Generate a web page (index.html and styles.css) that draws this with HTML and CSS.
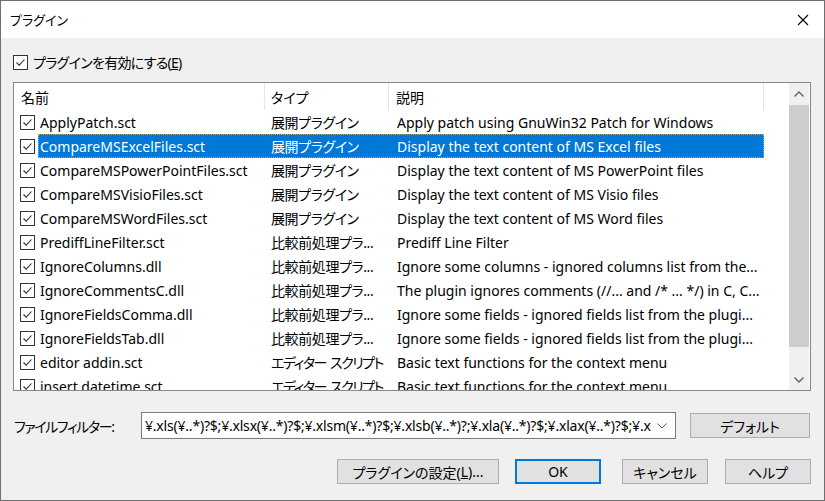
FILE: index.html
```html
<!DOCTYPE html>
<html lang="ja">
<head>
<meta charset="utf-8">
<title>プラグイン</title>
<link rel="stylesheet" href="styles.css">
</head>
<body>
<div class="window">
  <div class="titlebar">
    <span class="title">プラグイン</span>
    <svg class="close" width="12" height="12" viewBox="0 0 12 12"><path d="M1 1 L11 11 M11 1 L1 11" stroke="#000" stroke-width="1.1" fill="none"/></svg>
  </div>
  <div class="body">
    <label class="enable">
      <svg class="cb" width="15" height="15" viewBox="0 0 15 15"><rect x="0.5" y="0.5" width="14" height="14" fill="#fff" stroke="#333"/><path d="M3.5 7.5 L6.2 10.2 L11.5 4.5" stroke="#333" stroke-width="1.1" fill="none"/></svg>
      <span class="enable-text">プラグインを有効にする(<u>E</u>)</span>
    </label>

    <div class="list">
      <div class="list-content">
        <div class="header">
          <div class="h h-name">名前</div>
          <div class="h h-type">タイプ</div>
          <div class="h h-desc">説明</div>
          <div class="h h-rest"></div>
        </div>
        <div class="rows">
          <div class="row"><span class="cbcell"><svg class="cb" width="15" height="15" viewBox="0 0 15 15"><rect x="0.5" y="0.5" width="14" height="14" fill="#fff" stroke="#333"/><path d="M3.5 7.5 L6.2 10.2 L11.5 4.5" stroke="#333" stroke-width="1.1" fill="none"/></svg></span><div class="cells"><span class="c-name">ApplyPatch.sct</span><span class="c-type">展開プラグイン</span><span class="c-desc">Apply patch using GnuWin32 Patch for Windows</span></div></div>
          <div class="row"><span class="cbcell"><svg class="cb" width="15" height="15" viewBox="0 0 15 15"><rect x="0.5" y="0.5" width="14" height="14" fill="#fff" stroke="#333"/><path d="M3.5 7.5 L6.2 10.2 L11.5 4.5" stroke="#333" stroke-width="1.1" fill="none"/></svg></span><div class="cells selected"><span class="c-name">CompareMSExcelFiles.sct</span><span class="c-type">展開プラグイン</span><span class="c-desc">Display the text content of MS Excel files</span></div></div>
          <div class="row"><span class="cbcell"><svg class="cb" width="15" height="15" viewBox="0 0 15 15"><rect x="0.5" y="0.5" width="14" height="14" fill="#fff" stroke="#333"/><path d="M3.5 7.5 L6.2 10.2 L11.5 4.5" stroke="#333" stroke-width="1.1" fill="none"/></svg></span><div class="cells"><span class="c-name">CompareMSPowerPointFiles.sct</span><span class="c-type">展開プラグイン</span><span class="c-desc">Display the text content of MS PowerPoint files</span></div></div>
          <div class="row"><span class="cbcell"><svg class="cb" width="15" height="15" viewBox="0 0 15 15"><rect x="0.5" y="0.5" width="14" height="14" fill="#fff" stroke="#333"/><path d="M3.5 7.5 L6.2 10.2 L11.5 4.5" stroke="#333" stroke-width="1.1" fill="none"/></svg></span><div class="cells"><span class="c-name">CompareMSVisioFiles.sct</span><span class="c-type">展開プラグイン</span><span class="c-desc">Display the text content of MS Visio files</span></div></div>
          <div class="row"><span class="cbcell"><svg class="cb" width="15" height="15" viewBox="0 0 15 15"><rect x="0.5" y="0.5" width="14" height="14" fill="#fff" stroke="#333"/><path d="M3.5 7.5 L6.2 10.2 L11.5 4.5" stroke="#333" stroke-width="1.1" fill="none"/></svg></span><div class="cells"><span class="c-name">CompareMSWordFiles.sct</span><span class="c-type">展開プラグイン</span><span class="c-desc">Display the text content of MS Word files</span></div></div>
          <div class="row"><span class="cbcell"><svg class="cb" width="15" height="15" viewBox="0 0 15 15"><rect x="0.5" y="0.5" width="14" height="14" fill="#fff" stroke="#333"/><path d="M3.5 7.5 L6.2 10.2 L11.5 4.5" stroke="#333" stroke-width="1.1" fill="none"/></svg></span><div class="cells"><span class="c-name">PrediffLineFilter.sct</span><span class="c-type">比較前処理プラ...</span><span class="c-desc">Prediff Line Filter</span></div></div>
          <div class="row"><span class="cbcell"><svg class="cb" width="15" height="15" viewBox="0 0 15 15"><rect x="0.5" y="0.5" width="14" height="14" fill="#fff" stroke="#333"/><path d="M3.5 7.5 L6.2 10.2 L11.5 4.5" stroke="#333" stroke-width="1.1" fill="none"/></svg></span><div class="cells"><span class="c-name">IgnoreColumns.dll</span><span class="c-type">比較前処理プラ...</span><span class="c-desc">Ignore some columns - ignored columns list from the...</span></div></div>
          <div class="row"><span class="cbcell"><svg class="cb" width="15" height="15" viewBox="0 0 15 15"><rect x="0.5" y="0.5" width="14" height="14" fill="#fff" stroke="#333"/><path d="M3.5 7.5 L6.2 10.2 L11.5 4.5" stroke="#333" stroke-width="1.1" fill="none"/></svg></span><div class="cells"><span class="c-name">IgnoreCommentsC.dll</span><span class="c-type">比較前処理プラ...</span><span class="c-desc">The plugin ignores comments (//... and /* ... */) in C, C...</span></div></div>
          <div class="row"><span class="cbcell"><svg class="cb" width="15" height="15" viewBox="0 0 15 15"><rect x="0.5" y="0.5" width="14" height="14" fill="#fff" stroke="#333"/><path d="M3.5 7.5 L6.2 10.2 L11.5 4.5" stroke="#333" stroke-width="1.1" fill="none"/></svg></span><div class="cells"><span class="c-name">IgnoreFieldsComma.dll</span><span class="c-type">比較前処理プラ...</span><span class="c-desc">Ignore some fields - ignored fields list from the plugi...</span></div></div>
          <div class="row"><span class="cbcell"><svg class="cb" width="15" height="15" viewBox="0 0 15 15"><rect x="0.5" y="0.5" width="14" height="14" fill="#fff" stroke="#333"/><path d="M3.5 7.5 L6.2 10.2 L11.5 4.5" stroke="#333" stroke-width="1.1" fill="none"/></svg></span><div class="cells"><span class="c-name">IgnoreFieldsTab.dll</span><span class="c-type">比較前処理プラ...</span><span class="c-desc">Ignore some fields - ignored fields list from the plugi...</span></div></div>
          <div class="row"><span class="cbcell"><svg class="cb" width="15" height="15" viewBox="0 0 15 15"><rect x="0.5" y="0.5" width="14" height="14" fill="#fff" stroke="#333"/><path d="M3.5 7.5 L6.2 10.2 L11.5 4.5" stroke="#333" stroke-width="1.1" fill="none"/></svg></span><div class="cells"><span class="c-name">editor addin.sct</span><span class="c-type narrow">エディター スクリプト</span><span class="c-desc">Basic text functions for the context menu</span></div></div>
          <div class="row"><span class="cbcell"><svg class="cb" width="15" height="15" viewBox="0 0 15 15"><rect x="0.5" y="0.5" width="14" height="14" fill="#fff" stroke="#333"/><path d="M3.5 7.5 L6.2 10.2 L11.5 4.5" stroke="#333" stroke-width="1.1" fill="none"/></svg></span><div class="cells"><span class="c-name">insert datetime.sct</span><span class="c-type narrow">エディター スクリプト</span><span class="c-desc">Basic text functions for the context menu</span></div></div>
        </div>
      </div>
      <div class="scrollbar">
        <div class="sb-btn"><svg width="10" height="6" viewBox="0 0 10 6"><path d="M0.5 5.5 L5 1 L9.5 5.5" stroke="#606060" stroke-width="1.4" fill="none"/></svg></div>
        <div class="sb-thumb"></div>
        <div class="sb-track"></div>
        <div class="sb-btn"><svg width="10" height="6" viewBox="0 0 10 6"><path d="M0.5 0.5 L5 5 L9.5 0.5" stroke="#606060" stroke-width="1.4" fill="none"/></svg></div>
      </div>
    </div>

    <div class="filter-row">
      <span class="filter-label">ファイルフィルター:</span>
      <div class="combo">
        <span class="combo-text">¥.xls(¥..*)?$;¥.xlsx(¥..*)?$;¥.xlsm(¥..*)?$;¥.xlsb(¥..*)?;¥.xla(¥..*)?$;¥.xlax(¥..*)?$;¥.x</span>
        <svg class="combo-arrow" width="10" height="6" viewBox="0 0 10 6"><path d="M0.5 0.5 L5 5 L9.5 0.5" stroke="#555" stroke-width="1" fill="none"/></svg>
      </div>
      <button class="btn btn-default">デフォルト</button>
    </div>

    <div class="button-row">
      <button class="btn btn-settings">プラグインの設定(<u>L</u>)...</button>
      <button class="btn btn-ok">OK</button>
      <button class="btn btn-cancel">キャンセル</button>
      <button class="btn btn-help">ヘルプ</button>
    </div>
  </div>
</div>
</body>
</html>
```

FILE: styles.css
```css
* { box-sizing: border-box; }
html, body { margin: 0; padding: 0; }
body {
  font-family: "Noto Sans", "Noto Sans CJK JP", sans-serif;
  font-size: 14px;
  color: #000;
  background: #f0f0f0;
  font-feature-settings: "palt";
}
.window {
  width: 825px;
  height: 501px;
  border: 1px solid #6f6f6f;
  display: flex;
  flex-direction: column;
  background: #f0f0f0;
}
.titlebar {
  height: 37px;
  background: #fff;
  display: flex;
  align-items: center;
  justify-content: space-between;
  padding: 0 15px 0 9px;
  flex: none;
}
.title { font-size: 13px; }
.close { display: block; }
.body {
  flex: 1;
  padding: 0 13px 0 12px;
  display: flex;
  flex-direction: column;
}
.enable {
  display: flex;
  align-items: center;
  gap: 5px;
  margin-top: 17px;
  height: 15px;
  line-height: 15px;
}
.enable-text { letter-spacing: -0.7px; }
.cb { display: block; flex: none; }
.list {
  margin-top: 12px;
  height: 309px;
  border: 1px solid #828790;
  background: #fff;
  display: flex;
  overflow: hidden;
}
.list-content {
  flex: 1;
  overflow: hidden;
}
.header {
  display: flex;
  height: 27px;
  align-items: stretch;
}
.h {
  display: flex;
  align-items: center;
  border-right: 1px solid #e5e5e5;
  white-space: nowrap;
}
.h-name { width: 251px; padding-left: 7px; }
.h-type { width: 124px; padding-left: 6px; }
.h-desc { width: 375px; padding-left: 7px; }
.h-rest { border-right: none; flex: 1; }
.rows { display: flex; flex-direction: column; }
.row {
  display: flex;
  height: 24px;
  flex: none;
  align-items: center;
}
.cbcell {
  width: 24px;
  padding-left: 6px;
  flex: none;
}
.cells {
  display: flex;
  width: 726px;
  height: 24px;
  align-items: center;
  white-space: nowrap;
}
.cells.selected {
  background: #0078d7;
  color: #fff;
  outline: 1px dotted #f39a2a;
  outline-offset: -1px;
}
.c-name { width: 227px; padding-left: 2px; overflow: hidden; }
.c-type { width: 124px; padding-left: 6px; overflow: hidden; letter-spacing: -0.4px; }
.c-type.narrow { letter-spacing: -1.5px; word-spacing: 2px; overflow: visible; }
.c-desc { width: 375px; padding-left: 8px; overflow: hidden; }
.scrollbar {
  width: 20px;
  margin-right: 1px;
  background: #f0f0f0;
  display: flex;
  flex-direction: column;
  flex: none;
}
.sb-btn {
  height: 21px;
  display: flex;
  align-items: center;
  justify-content: center;
  flex: none;
}
.sb-btn svg { display: block; }
.sb-thumb {
  height: 242px;
  margin-top: 1px;
  background: #cdcdcd;
  flex: none;
}
.sb-track { flex: 1; }
.filter-row {
  display: flex;
  align-items: center;
  margin-top: 21px;
  height: 27px;
}
.filter-label {
  width: 128px;
  padding-left: 1px;
  flex: none;
  white-space: nowrap;
  letter-spacing: -1.4px;
}
.combo {
  width: 535px;
  height: 27px;
  border: 1px solid #7a7a7a;
  background: #fff;
  display: flex;
  align-items: center;
  padding-left: 3px;
  padding-right: 8px;
  flex: none;
}
.combo-text {
  flex: 1;
  white-space: nowrap;
  overflow: hidden;
  letter-spacing: -0.2px;
}
.combo-arrow { display: block; flex: none; margin-left: 4px; }
.btn {
  font-family: inherit;
  font-size: 14px;
  font-feature-settings: "palt";
  color: #000;
  background: #e1e1e1;
  border: 1px solid #adadad;
  height: 25px;
  padding: 0;
  margin: 0;
  display: flex;
  align-items: center;
  justify-content: center;
  flex: none;
}
.btn-default { width: 120px; margin-left: 14px; }
.button-row {
  display: flex;
  justify-content: flex-end;
  margin-top: 20px;
}
.btn-settings { width: 162px; }
.btn-ok { width: 86px; margin-left: 16px; border: 2px solid #0078d7; }
.btn-cancel { width: 86px; margin-left: 21px; }
.btn-help { width: 86px; margin-left: 17px; }
```
